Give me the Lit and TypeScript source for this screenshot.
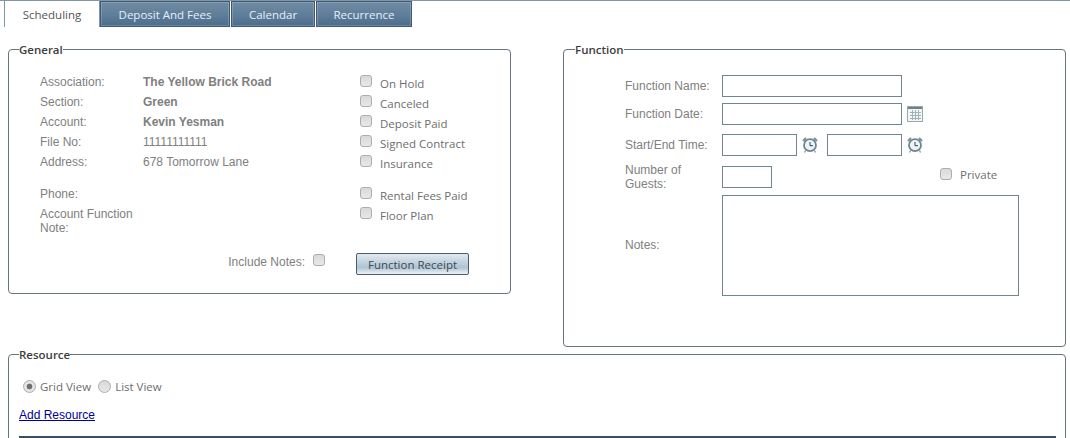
import { LitElement, html, css, svg } from "lit";
import { customElement } from "lit/decorators.js";

const calendarIcon = html`<svg class="icon cal" width="16" height="16" viewBox="0 0 16 16">
  <rect x="0.5" y="0.5" width="15" height="15" fill="#f3f6f7" stroke="#9aa8af" />
  <rect x="1" y="1" width="14" height="2" fill="#6f8087" />
  ${[5, 8, 11].map((x) => svg`<path d="M${x + 0.5} 4V14" stroke="#a3b0b7" />`)}
  ${[6, 9, 12].map((y) => svg`<path d="M3 ${y + 0.5}H14" stroke="#a3b0b7" />`)}
</svg>`;

const clockIcon = html`<svg class="icon" width="16" height="16" viewBox="0 0 16 16">
  <path d="M1 4 4 1M15 4 12 1" stroke="#7d8f99" stroke-width="2.2" />
  <path d="M3.5 13.5 2.5 15.5M12.5 13.5 13.5 15.5" stroke="#7d8f99" stroke-width="1.2" />
  <circle cx="8" cy="8.2" r="6" fill="#eef3f6" stroke="#6d8593" stroke-width="1.8" />
  <path d="M8 5V8.7H11" fill="none" stroke="#33464f" stroke-width="1" />
</svg>`;

@customElement("app-root")
export class AppRoot extends LitElement {
  static styles = css`
    :host {
      display: block;
      height: 438px;
      overflow: hidden;
      background: #fff;
      font-family: "Liberation Sans", Arial, sans-serif;
      font-size: 12px;
      color: #808080;
    }
    .tabs {
      display: flex;
      height: 27px;
      box-sizing: border-box;
      padding-left: 4px;
      border-top: 1px solid #7d98a8;
      gap: 1px;
    }
    .tab {
      box-sizing: border-box;
      height: 26px;
      line-height: 25px;
      text-align: center;
      font-family: "Open Sans", sans-serif;
      font-size: 11.5px;
      color: #e6eff6;
      background: linear-gradient(#718ba3, #607f9b 50%, #4b6d8c);
      border: 1px solid #41586e;
      box-shadow: inset 0 0 0 1px rgba(255, 255, 255, 0.18);
    }
    .tab.active {
      color: #555;
      background: #fff;
      border: 1px solid #7d98a8;
      border-bottom: none;
      box-shadow: none;
      margin-top: -1px;
      height: 27px;
      line-height: 27px;
      margin-right: -1px;
    }
    .columns {
      display: flex;
      gap: 52px;
      padding: 14px 4px 0 8px;
      align-items: flex-start;
    }
    fieldset {
      margin: 0;
      min-width: 0;
      border: 1px solid #66737c;
      border-radius: 4px;
      box-sizing: border-box;
    }
    legend {
      padding: 2px 0 0;
      font-family: "Open Sans", sans-serif;
      font-size: 11.5px;
      font-weight: 600;
      line-height: 14px;
      color: #3d3d3d;
    }
    .general {
      width: 503px;
      height: 253px;
      padding: 0 0 0 10px;
    }
    .general .body {
      padding: 15px 0 0 21px;
    }
    .function {
      width: 503px;
      height: 306px;
      padding: 0 0 0 11px;
    }
    .function .body {
      padding: 18px 0 0 50px;
    }
    .resource {
      margin: -1px 4px 0 8px;
      height: 121px;
      padding: 16px 0 0 10px;
    }
    .general-top {
      display: flex;
    }
    .info {
      width: 320px;
    }
    .info-row {
      display: flex;
      min-height: 20px;
      padding: 3px 0;
      box-sizing: border-box;
      line-height: 14px;
    }
    .info-row.spaced {
      margin-top: 12px;
    }
    .info-row .key {
      width: 103px;
    }
    .info-row .key.wide {
      width: 100px;
    }
    .strong {
      font-weight: 700;
    }
    .checks {
      padding-top: 2px;
    }
    .check-row {
      display: flex;
      height: 20px;
      align-items: flex-start;
      gap: 8px;
      font-family: "Open Sans", sans-serif;
      font-size: 11.5px;
      line-height: 20px;
      color: #6e6e6e;
    }
    .check-row.spaced {
      margin-top: 12px;
    }
    input[type="checkbox"],
    input[type="radio"] {
      appearance: none;
      flex: none;
      box-sizing: border-box;
      width: 12px;
      height: 12px;
      margin: 1px 0 0;
      background: linear-gradient(#d9d9d9, #e8e8e8);
      border: 1px solid #adadad;
      border-radius: 3px;
    }
    input[type="radio"] {
      border-radius: 50%;
      margin: 0;
      width: 13px;
      height: 13px;
    }
    input[type="radio"]:checked {
      background: radial-gradient(circle, #6f6f6f 0 2.6px, #e4e4e4 3.2px);
    }
    .general-bottom {
      display: flex;
      margin-top: 15px;
      height: 22px;
    }
    .include {
      width: 320px;
      display: flex;
      justify-content: flex-end;
      gap: 8px;
      box-sizing: border-box;
      padding-right: 35px;
      line-height: 18px;
    }
    .receipt {
      margin: 0 0 0 -4px;
      width: 113px;
      height: 22px;
      padding: 0;
      font-family: "Open Sans", sans-serif;
      font-size: 11.5px;
      color: #3f4a52;
      border: 1px solid #4a5c6b;
      border-radius: 2px;
      background: linear-gradient(#e0e9ef, #c4d3df 40%, #aec3d3 68%, #eef3f6);
    }
    .form-row {
      display: flex;
      align-items: center;
    }
    .form-row .key {
      width: 97px;
      flex: none;
      line-height: 14px;
    }
    .form-row input[type="text"],
    textarea {
      box-sizing: border-box;
      height: 22px;
      margin: 0;
      padding: 0;
      background: #fff;
      border: 1px solid #73868f;
      display: block;
      resize: none;
    }
    .form-row input.w180 {
      width: 180px;
    }
    .form-row input.w75 {
      width: 75px;
    }
    .form-row input.w50 {
      width: 50px;
    }
    .icon {
      display: block;
      flex: none;
      margin-left: 5px;
    }
    .date {
      margin-top: 6px;
    }
    .time {
      margin-top: 9px;
    }
    .form-row input.second {
      margin-left: 9px;
    }
    .guests {
      margin-top: 10px;
      height: 22px;
    }
    .private {
      display: flex;
      gap: 8px;
      margin-left: 168px;
      font-family: "Open Sans", sans-serif;
      font-size: 11.5px;
      color: #6e6e6e;
      line-height: 16px;
      align-items: center;
      margin-bottom: 4px;
    }
    .private input {
      margin: 0 0 2px;
    }
    .notes {
      margin-top: 7px;
    }
    .notes .key {
      margin-bottom: 2px;
    }
    .form-row textarea {
      width: 297px;
      height: 101px;
    }
    .views {
      display: flex;
      align-items: center;
      height: 16px;
      padding-left: 4px;
      font-family: "Open Sans", sans-serif;
      font-size: 11.5px;
      color: #6e6e6e;
    }
    .views label {
      margin: 1px 7px 0 4px;
    }
    .add {
      display: block;
      margin-top: 14px;
      line-height: 14px;
      color: #00009c;
      text-decoration: underline;
    }
    .grid-head {
      margin: 14px 9px 0 0;
      height: 3px;
      background: #3b4e60;
    }
  `;

  render() {
    return html`
      <div class="tabs">
        <div class="tab active" style="width:96px">Scheduling</div>
        <div class="tab" style="width:130px">Deposit And Fees</div>
        <div class="tab" style="width:84px">Calendar</div>
        <div class="tab" style="width:96px">Recurrence</div>
      </div>

      <div class="columns">
        <fieldset class="general">
          <legend>General</legend>
          <div class="body">
            <div class="general-top">
              <div class="info">
                <div class="info-row"><span class="key">Association:</span><span class="strong">The Yellow Brick Road</span></div>
                <div class="info-row"><span class="key">Section:</span><span class="strong">Green</span></div>
                <div class="info-row"><span class="key">Account:</span><span class="strong">Kevin Yesman</span></div>
                <div class="info-row"><span class="key">File No:</span><span>11111111111</span></div>
                <div class="info-row"><span class="key">Address:</span><span>678 Tomorrow Lane</span></div>
                <div class="info-row spaced"><span class="key">Phone:</span></div>
                <div class="info-row"><span class="key wide">Account Function Note:</span></div>
              </div>
              <div class="checks">
                <div class="check-row"><input type="checkbox" /><span>On Hold</span></div>
                <div class="check-row"><input type="checkbox" /><span>Canceled</span></div>
                <div class="check-row"><input type="checkbox" /><span>Deposit Paid</span></div>
                <div class="check-row"><input type="checkbox" /><span>Signed Contract</span></div>
                <div class="check-row"><input type="checkbox" /><span>Insurance</span></div>
                <div class="check-row spaced"><input type="checkbox" /><span>Rental Fees Paid</span></div>
                <div class="check-row"><input type="checkbox" /><span>Floor Plan</span></div>
              </div>
            </div>
            <div class="general-bottom">
              <div class="include"><span>Include Notes:</span><input type="checkbox" /></div>
              <button class="receipt">Function Receipt</button>
            </div>
          </div>
        </fieldset>

        <fieldset class="function">
          <legend>Function</legend>
          <div class="body">
            <div class="form-row">
              <span class="key">Function Name:</span>
              <input type="text" class="w180" />
            </div>
            <div class="form-row date">
              <span class="key">Function Date:</span>
              <input type="text" class="w180" />
              ${calendarIcon}
            </div>
            <div class="form-row time">
              <span class="key">Start/End Time:</span>
              <input type="text" class="w75" />
              ${clockIcon}
              <input type="text" class="w75 second" />
              ${clockIcon}
            </div>
            <div class="form-row guests">
              <span class="key">Number of Guests:</span>
              <input type="text" class="w50" />
              <div class="private"><input type="checkbox" /><span>Private</span></div>
            </div>
            <div class="form-row notes">
              <span class="key">Notes:</span>
              <textarea></textarea>
            </div>
          </div>
        </fieldset>
      </div>

      <fieldset class="resource">
        <legend>Resource</legend>
        <div class="views">
          <input type="radio" name="view" checked /><label>Grid View</label>
          <input type="radio" name="view" /><label>List View</label>
        </div>
        <a class="add" href="#">Add Resource</a>
        <div class="grid-head"></div>
      </fieldset>
    `;
  }
}
